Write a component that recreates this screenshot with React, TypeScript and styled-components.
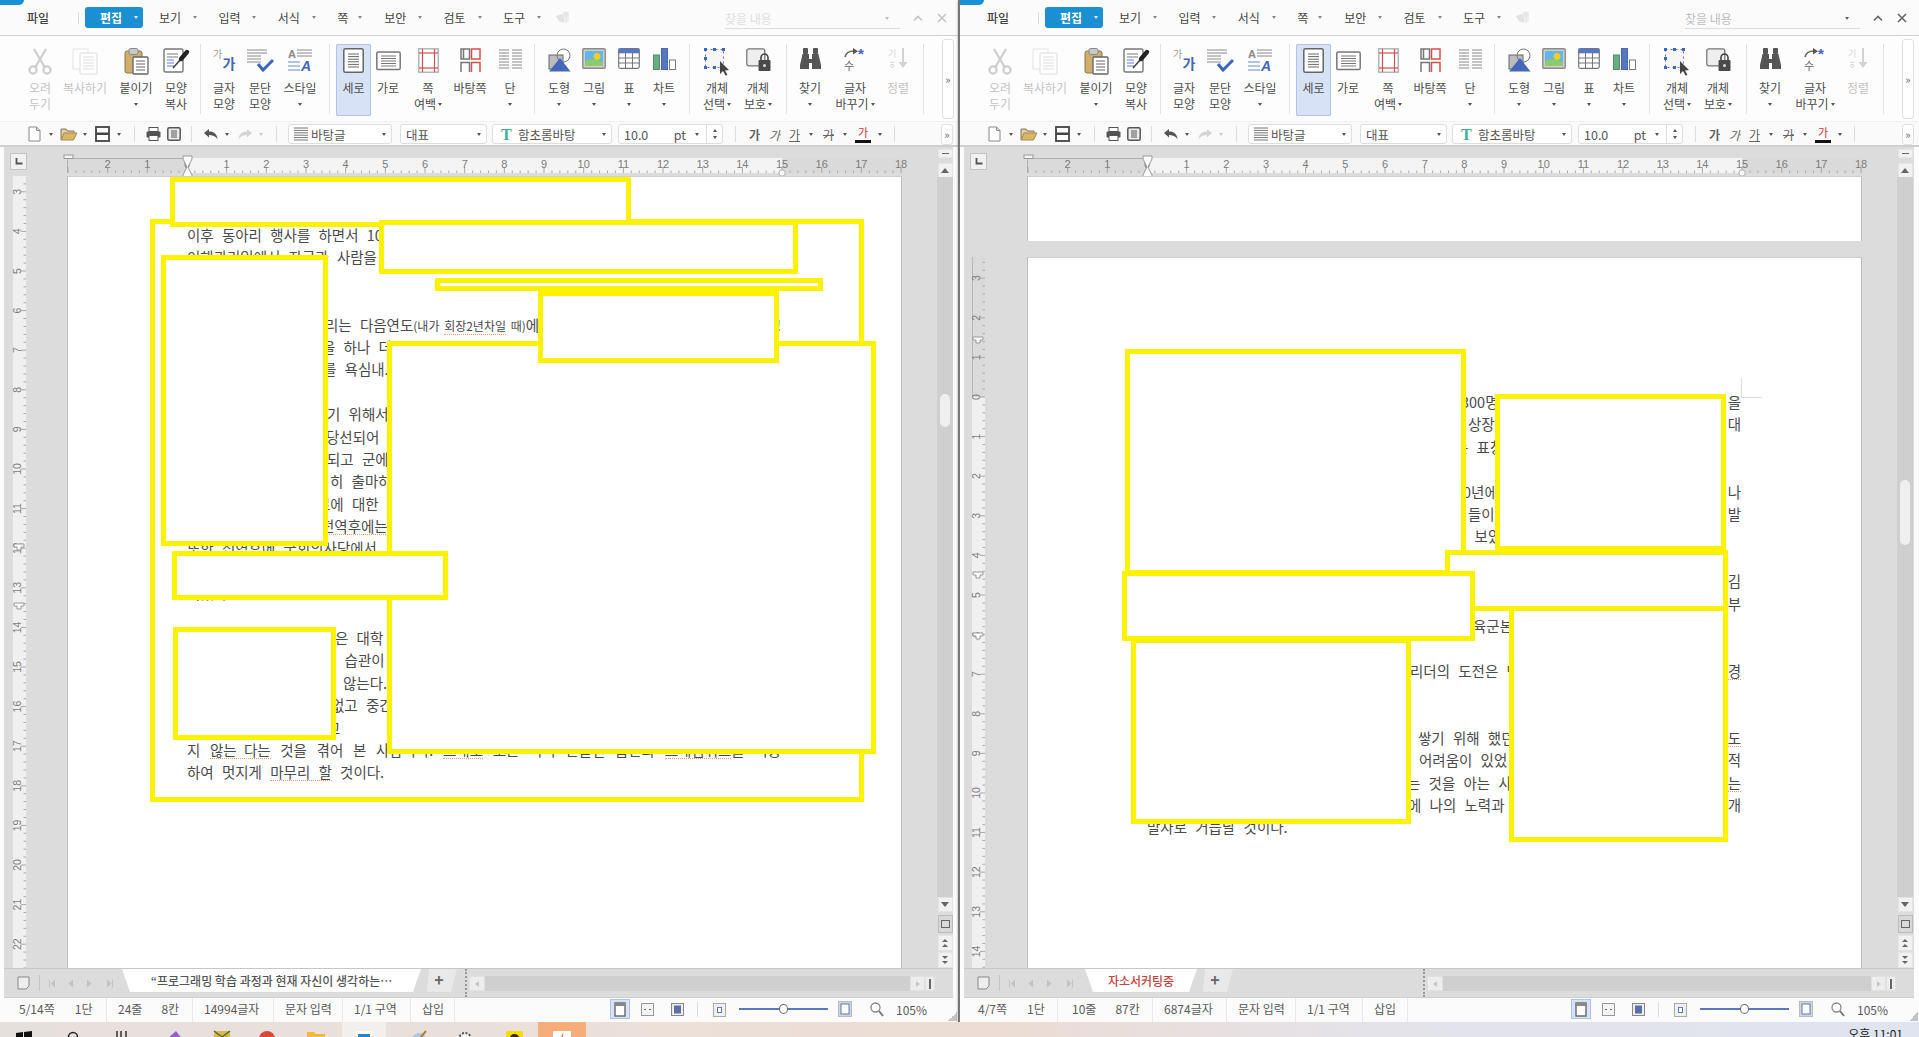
import React from "react";
import styled, { createGlobalStyle } from "styled-components";

const FONT = `"Noto Sans CJK KR", "Noto Sans", sans-serif`;

const GlobalStyle = createGlobalStyle`
  html, body {
    margin: 0;
    padding: 0;
    width: 1919px;
    height: 1037px;
    overflow: hidden;
    background: #e8e2de;
    font-family: ${FONT};
  }
`;

const Desktop = styled.div`
  width: 1919px;
  height: 1037px;
  display: flex;
  flex-direction: column;
  overflow: hidden;
`;

const Windows = styled.div`
  display: flex;
  height: 1022px;
`;

const Win = styled.div<{ $w: number; $second?: boolean }>`
  position: relative;
  box-sizing: border-box;
  width: ${(p) => p.$w}px;
  display: grid;
  grid-template-rows: 36px 86px 25px 821px 30px 24px;
  background: #fcfcfc;
  border-left: ${(p) => (p.$second ? "2px solid #777" : "none")};
  box-shadow: 0 1px 2px rgba(0, 0, 0, 0.45);
  overflow: hidden;
`;

/* menu bar */
const MenuBar = styled.div`
  position: relative;
  display: flex;
  align-items: center;
  border-bottom: 1px solid #d0d0d0;
  background: #fbfbfb;
  font-size: 12px;
  color: #444;
`;

const AppTab = styled.div`
  position: absolute;
  left: 0;
  top: 0;
  width: 24px;
  height: 5px;
  background: #1a8fd1;
  border-bottom-right-radius: 5px;
`;

const FileItem = styled.div`
  margin-left: 27px;
  width: 51px;
  font-weight: 500;
`;

const MenuSep = styled.div`
  width: 1px;
  height: 12px;
  background: #ddd;
`;

const ActiveMenu = styled.div`
  margin: 0 16px 0 6px;
  width: 58px;
  height: 21px;
  box-sizing: border-box;
  padding-left: 15px;
  display: flex;
  align-items: center;
  background: #1a8fd1;
  border-radius: 3px;
  color: #fff;
  font-weight: 700;
`;

const MenuItem = styled.div<{ $w: number }>`
  flex: none;
  width: ${(p) => p.$w}px;
  display: flex;
  align-items: center;
`;

const Caret = styled.span<{ $ml?: number; $color?: string }>`
  display: inline-block;
  flex: none;
  margin-left: ${(p) => p.$ml ?? 0}px;
  width: 0;
  height: 0;
  border-top: 3px solid ${(p) => p.$color ?? "#555"};
  border-left: 2.5px solid transparent;
  border-right: 2.5px solid transparent;
  vertical-align: middle;
`;

const MenuGhost = styled.div`
  margin-left: -6.4px;
  width: 169px;
  display: flex;
`;

const FindBox = styled.div<{ $dark?: boolean }>`
  box-sizing: border-box;
  width: 175px;
  height: 20px;
  margin-top: 3px;
  display: flex;
  align-items: center;
  justify-content: space-between;
  padding-right: 11px;
  border-bottom: 1px solid #ddd;
  color: ${(p) => (p.$dark ? "#bdbdbd" : "#dedede")};
`;

const WinBtn = styled.div<{ $dark?: boolean; $ml: number }>`
  margin-left: ${(p) => p.$ml}px;
  display: flex;
  color: ${(p) => (p.$dark ? "#666" : "#c4c4c4")};
`;

/* ribbon */
const Ribbon = styled.div`
  display: flex;
  padding-left: 18px;
  background: #fdfdfd;
  border-bottom: 1px solid #f0f0f0;
`;

const Group = styled.div<{ $w: number; $pad?: number }>`
  display: flex;
  box-sizing: border-box;
  width: ${(p) => p.$w}px;
  padding-left: ${(p) => p.$pad ?? 0}px;
`;

const GroupSep = styled.div`
  align-self: center;
  width: 1px;
  height: 70px;
  background: #e2e2e2;
`;

const Item = styled.div<{ $w: number; $off?: boolean; $active?: boolean }>`
  flex: none;
  box-sizing: border-box;
  width: ${(p) => p.$w}px;
  margin-top: ${(p) => (p.$active ? "8px" : "0")};
  height: ${(p) => (p.$active ? "72px" : "auto")};
  padding-top: ${(p) => (p.$active ? "4px" : "12px")};
  display: flex;
  flex-direction: column;
  align-items: center;
  white-space: nowrap;
  font-size: 12px;
  line-height: 16px;
  color: ${(p) => (p.$off ? "#c4c4c4" : "#4c4c4c")};
  background: ${(p) => (p.$active ? "#d8e2f6" : "transparent")};
  outline: ${(p) => (p.$active ? "1px solid #aec3ea" : "none")};
  outline-offset: -1px;
  border-radius: 2px;
`;

const Slot = styled.div`
  height: 32px;
  display: flex;
  justify-content: center;
  align-items: flex-start;
`;

const ItemLine = styled.div`
  height: 16px;
  display: flex;
  align-items: center;
`;

const CollapseBtn = styled.div`
  flex: none;
  box-sizing: border-box;
  margin: 3px 0 2px 18px;
  width: 12px;
  display: flex;
  align-items: center;
  justify-content: center;
  border: 1px solid #e0e0e0;
  border-radius: 3px;
  background: #fff;
  font-size: 11px;
  color: #666;
`;

/* toolbar */
const ToolBar = styled.div`
  display: flex;
  align-items: center;
  padding: 1px 0 0 28px;
  background: #fafafa;
  border-bottom: 2px solid #cfcfcf;
  font-size: 12.5px;
  color: #555;
`;

const Tool = styled.div<{ $ml: number; $w?: number }>`
  flex: none;
  display: flex;
  align-items: center;
  margin-left: ${(p) => p.$ml}px;
  ${(p) => (p.$w ? `width: ${p.$w}px;` : "")}
`;

const ToolSep = styled.div<{ $ml: number }>`
  flex: none;
  margin-left: ${(p) => p.$ml}px;
  width: 1px;
  height: 16px;
  background: #ddd;
`;

const Combo = styled.div<{ $ml: number; $w: number; $pad?: number; $gap?: number }>`
  flex: none;
  box-sizing: border-box;
  margin-left: ${(p) => p.$ml}px;
  width: ${(p) => p.$w}px;
  height: 20px;
  padding: 0 5px 0 ${(p) => p.$pad ?? 5}px;
  display: flex;
  align-items: center;
  gap: ${(p) => p.$gap ?? 3}px;
  background: #fff;
  border: 1px solid #dedede;
  border-radius: 3px;
  white-space: nowrap;
`;

const ComboEnd = styled.span`
  margin-left: auto;
  display: flex;
  align-items: center;
`;

const Spin = styled.div`
  margin-left: 7px;
  margin-right: -5px;
  width: 15px;
  align-self: stretch;
  height: 18px;
  border-left: 1px solid #dedede;
  display: flex;
  flex-direction: column;
  align-items: center;
  justify-content: center;
  gap: 4px;
`;

const CaretUp = styled(Caret)`
  border-top: none;
  border-bottom: 3px solid #555;
`;

const Glyph = styled.span<{ $ml: number; $bold?: boolean; $italic?: boolean; $under?: boolean; $strike?: boolean }>`
  flex: none;
  margin-left: ${(p) => p.$ml}px;
  width: 13px;
  text-align: center;
  font-size: 12px;
  line-height: 15px;
  font-weight: ${(p) => (p.$bold ? 700 : 400)};
  font-style: ${(p) => (p.$italic ? "italic" : "normal")};
  text-decoration: ${(p) => (p.$under ? "underline" : p.$strike ? "line-through" : "none")};
  color: #666;
`;

const ColorGlyph = styled.span<{ $ml: number }>`
  flex: none;
  margin-left: ${(p) => p.$ml}px;
  width: 16px;
  height: 17px;
  box-sizing: border-box;
  border-bottom: 3px solid #111;
  text-align: center;
  font-size: 11px;
  line-height: 13px;
  color: #c33;
`;

const ToolEnd = styled.div`
  margin-left: auto;
  margin-right: 5px;
  box-sizing: border-box;
  width: 12px;
  height: 21px;
  border: 1px solid #e0e0e0;
  border-radius: 3px;
  background: #fff;
  color: #666;
  font-size: 11px;
  display: flex;
  align-items: center;
  justify-content: center;
`;

/* work area */
const Workspace = styled.div`
  margin: 0 5px 0 4px;
  display: grid;
  grid-template-columns: 63px 835px 35px 16px;
  grid-template-rows: 29px 792px;
  background: #dcdcdc;
`;

const Corner = styled.div`
  margin: 6px 0 0 6px;
  box-sizing: border-box;
  width: 17px;
  height: 17px;
  background: #f1f1f1;
  border: 1px solid #c4c4c4;
  display: flex;
  align-items: center;
  justify-content: center;
`;

const RulerTop = styled.div`
  padding-top: 7px;
  height: 15px;
`;

const GapCell = styled.div`
  grid-row: 1 / 3;
  grid-column: 3;
`;

const RulerSide = styled.div<{ $top: number; $ml: number }>`
  padding: ${(p) => p.$top}px 0 0 ${(p) => p.$ml}px;
`;

const Pages = styled.div`
  display: flex;
  flex-direction: column;
  gap: 16px;
  min-height: 0;
`;

const Page = styled.div<{ $h?: number; $top?: number }>`
  position: relative;
  box-sizing: border-box;
  ${(p) => (p.$h ? `height: ${p.$h}px; flex: none;` : "flex: 1; min-height: 0;")}
  padding: ${(p) => p.$top ?? 0}px 0 0 119px;
  background: #fff;
  border-left: 1px solid #bdbdbd;
  border-right: 1px solid #bdbdbd;
  border-top: 1px solid #cfcfcf;
  color: #4a4a4a;
  font-size: 14.5px;
`;

const TextCol = styled.div`
  width: 594px;
`;

const Line = styled.div<{ $x?: number }>`
  box-sizing: border-box;
  height: 22.4px;
  line-height: 22.4px;
  padding-left: ${(p) => p.$x ?? 0}px;
  display: flex;
  justify-content: space-between;
  white-space: pre;
  word-spacing: 5px;
`;

const FullLine = styled.div`
  height: 22.4px;
  line-height: 22.4px;
  overflow: hidden;
  text-align: justify;
  text-align-last: justify;
  word-spacing: 4px;
`;

const Typo = styled.span`
  display: inline-block;
  height: 19px;
  line-height: 21px;
  border-bottom: 1px dotted #eb9a72;
`;

const Small = styled.span`
  font-size: 12px;
  word-spacing: 2px;
`;

const PageCorner = styled.div`
  position: absolute;
  left: 713px;
  top: 120px;
  width: 20px;
  height: 19px;
  border-left: 1px solid #ddd;
  border-bottom: 1px solid #ddd;
`;

const ScrollBar = styled.div`
  grid-row: 1 / 3;
  grid-column: 4;
  display: flex;
  flex-direction: column;
  align-items: center;
`;

const ScrollBtn = styled.div<{ $mt?: number; $h: number; $dark?: boolean }>`
  flex: none;
  box-sizing: border-box;
  width: 15px;
  height: ${(p) => p.$h}px;
  margin-top: ${(p) => p.$mt ?? 0}px;
  background: ${(p) => (p.$dark ? "#d8d8d8" : "#f1f1f1")};
  border: 1px solid ${(p) => (p.$dark ? "#bbb" : "#e4e4e4")};
  display: flex;
  flex-direction: column;
  gap: 2px;
  align-items: center;
  justify-content: center;
`;

const ScrollTrack = styled.div<{ $thumb: number; $len: number }>`
  flex: 1;
  align-self: stretch;
  background: #cfcfcf;
  box-sizing: border-box;
  padding: ${(p) => p.$thumb}px 3px 0;
  &::before {
    content: "";
    display: block;
    height: ${(p) => p.$len}px;
    border-radius: 5px;
    background: #efefef;
  }
`;

const ScrollHead = styled.div`
  flex: none;
  align-self: stretch;
  height: 30px;
  background: #dcdcdc;
  display: flex;
  flex-direction: column;
  align-items: center;
`;

const Dash = styled.div`
  width: 7px;
  height: 1.5px;
  background: #666;
`;

/* yellow cover boxes */
const Cover = styled.div<{ $x: number; $y: number; $w: number; $h: number; $hollow?: boolean }>`
  position: absolute;
  box-sizing: border-box;
  left: ${(p) => p.$x}px;
  top: ${(p) => p.$y}px;
  width: ${(p) => p.$w}px;
  height: ${(p) => p.$h}px;
  border: 5px solid #fff200;
  background: ${(p) => (p.$hollow ? "transparent" : "#fff")};
`;

/* sheet tabs */
const TabBar = styled.div`
  margin: 0 5px 0 4px;
  display: flex;
  align-items: flex-start;
  background: #dcdcdc;
  border-top: 1px solid #c6c6c6;
  border-bottom: 1px solid #cfcfcf;
`;

const TabArea = styled.div<{ $w: number }>`
  flex: none;
  width: ${(p) => p.$w}px;
  display: flex;
  align-items: flex-start;
`;

const NavZone = styled.div<{ $w: number }>`
  flex: none;
  box-sizing: border-box;
  width: ${(p) => p.$w}px;
  height: 28px;
  padding-left: 13px;
  display: flex;
  align-items: center;
`;

const NavSep = styled.div`
  margin: 0 9px 0 9px;
  width: 1px;
  height: 16px;
  background: #c4c4c4;
`;

const NavMark = styled.div<{ $ml: number }>`
  margin-left: ${(p) => p.$ml}px;
  display: flex;
`;

const SheetTab = styled.div<{ $w: number; $red?: boolean }>`
  flex: none;
  box-sizing: border-box;
  width: ${(p) => p.$w}px;
  height: 23px;
  display: flex;
  align-items: center;
  justify-content: center;
  white-space: nowrap;
  background: #fff;
  clip-path: polygon(0 0, 100% 0, calc(100% - 8px) 100%, 8px 100%);
  font-size: 12px;
  font-weight: 500;
  color: ${(p) => (p.$red ? "#c8413f" : "#555")};
`;

const AddTab = styled.div`
  flex: none;
  width: 36px;
  height: 23px;
  background: #e9e9e9;
  clip-path: polygon(8px 0, 100% 0, calc(100% - 6px) 100%, 6px 100%);
  text-align: center;
  font-size: 16px;
  line-height: 21px;
  font-weight: 700;
  color: #666;
`;

const Splitter = styled.div`
  flex: none;
  height: 28px;
  border-left: 2px dotted #999;
`;

const HScroll = styled.div`
  flex: 1;
  margin: 7px 18px 0 2px;
  height: 15px;
  display: flex;
  background: #cfcfcf;
`;

const HScrollBtn = styled.div<{ $w: number; $auto?: boolean }>`
  flex: none;
  box-sizing: border-box;
  width: ${(p) => p.$w}px;
  ${(p) => (p.$auto ? "margin-left: auto;" : "")}
  background: #ededed;
  border: 1px solid #e0e0e0;
  display: flex;
  align-items: center;
  justify-content: center;
`;

/* status bar */
const StatusBar = styled.div`
  position: relative;
  display: flex;
  align-items: stretch;
  background: #fbfbfb;
  font-size: 12px;
  color: #5a5a5a;
  white-space: nowrap;
`;

const Cell = styled.div<{ $w: number; $pad?: number; $gap?: number }>`
  flex: none;
  box-sizing: border-box;
  width: ${(p) => p.$w}px;
  padding: 0 0 3px ${(p) => p.$pad ?? 11}px;
  display: flex;
  align-items: center;
  gap: ${(p) => p.$gap ?? 0}px;
  border-right: 1px solid #e8e8e8;
`;

const StatusRight = styled.div`
  position: relative;
  box-sizing: border-box;
  margin-left: auto;
  padding-bottom: 2px;
  display: flex;
  align-items: center;
`;

const ViewBtn = styled.div<{ $ml?: number; $on?: boolean }>`
  flex: none;
  margin-left: ${(p) => p.$ml ?? 0}px;
  width: ${(p) => (p.$on ? "20px" : "14px")};
  height: 20px;
  display: flex;
  align-items: center;
  justify-content: center;
  background: ${(p) => (p.$on ? "#d8e2f6" : "transparent")};
  outline: ${(p) => (p.$on ? "1px solid #aec3ea" : "none")};
  outline-offset: -1px;
`;

const StatusDivider = styled.div`
  flex: none;
  margin-left: 13px;
  width: 1px;
  height: 15px;
  background: #ddd;
`;

const Slider = styled.div`
  position: relative;
  flex: none;
  margin-left: 13px;
  width: 89px;
  height: 10px;
  &::before {
    content: "";
    position: absolute;
    left: 0;
    right: 0;
    top: 4px;
    height: 2px;
    background: #5b78bf;
  }
  &::after {
    content: "";
    position: absolute;
    left: 40px;
    top: 0;
    box-sizing: border-box;
    width: 9px;
    height: 10px;
    border: 1px solid #666;
    border-radius: 50%;
    background: #fff;
  }
`;

const Zoom = styled.span`
  flex: none;
  margin-left: 12px;
  width: 62px;
`;

const Grip = styled.div`
  position: absolute;
  right: 1px;
  bottom: 1px;
  width: 9px;
  height: 9px;
  background: linear-gradient(135deg, transparent 50%, #c4c4c4 50%);
`;

/* task bar */
const TaskBar = styled.div`
  position: relative;
  flex: 1;
  display: flex;
  align-items: flex-start;
  overflow: hidden;
  background: linear-gradient(90deg, #e6e0dd 0%, #ece0d9 35%, #ecdcd3 52%, #e4e3ea 72%, #e0e4f0 100%);
`;

const TaskCell = styled.div<{ $ml: number; $w: number; $bg?: string }>`
  flex: none;
  margin-left: ${(p) => p.$ml}px;
  width: ${(p) => p.$w}px;
  height: 15px;
  padding-top: 9px;
  display: flex;
  justify-content: center;
  background: ${(p) => p.$bg ?? "transparent"};
`;

const Clock = styled.div`
  margin-left: auto;
  margin-right: 16px;
  padding-top: 3px;
  font-size: 12px;
  color: #222;
  white-space: nowrap;
`;

/* ---------- drawings ---------- */

const Svg = styled.svg`
  flex: none;
  overflow: visible;
`;

const Ico: React.FC<{ w: number; h: number; children: React.ReactNode }> = ({ w, h, children }) => (
  <Svg width={w} height={h} viewBox={`0 0 ${w} ${h}`} fill="none">
    {children}
  </Svg>
);

const Rows = ({ x1, x2, from, to, step, color }: { x1: number; x2: number; from: number; to: number; step: number; color: string }) => {
  const ys: number[] = [];
  for (let y = from; y <= to; y += step) ys.push(y);
  return (
    <>
      {ys.map((y) => (
        <line key={y} x1={x1} x2={x2} y1={y} y2={y} stroke={color} strokeWidth="1" />
      ))}
    </>
  );
};

const CutIcon = () => (
  <Ico w={24} h={27}>
    <g stroke="#cdcdcd" strokeWidth="2.2">
      <circle cx="5" cy="22" r="3.6" />
      <circle cx="19" cy="22" r="3.6" />
      <line x1="7.5" y1="19" x2="18" y2="1" />
      <line x1="16.5" y1="19" x2="6" y2="1" />
    </g>
  </Ico>
);

const CopyIcon = () => (
  <Ico w={26} h={27}>
    <rect x="1" y="1" width="15" height="20" stroke="#e4e4e4" fill="#fff" />
    <rect x="8" y="5" width="17" height="21" rx="1" stroke="#dcdcdc" fill="#fff" />
    <Rows x1={11} x2={22} from={9} to={23} step={3} color="#ddd" />
  </Ico>
);

const PasteIcon = () => (
  <Ico w={25} h={27}>
    <rect x="1" y="3" width="17" height="22" rx="2" fill="#cdae6e" stroke="#8e7748" />
    <rect x="5" y="0.5" width="9" height="6" rx="1.5" fill="#c8c8c8" stroke="#888" />
    <rect x="9" y="9" width="15" height="17" rx="1" fill="#fff" stroke="#666" strokeWidth="1.3" />
    <Rows x1={12} x2={21} from={13} to={22} step={3} color="#666" />
  </Ico>
);

const FormatIcon = () => (
  <Ico w={26} h={27}>
    <rect x="1" y="1" width="19" height="23" rx="1.5" fill="#fff" stroke="#777" strokeWidth="1.4" />
    <Rows x1={4} x2={15} from={6} to={9} step={3} color="#777" />
    <Rows x1={4} x2={11} from={12} to={18} step={3} color="#5a7bc8" />
    <line x1="10" y1="20" x2="18" y2="11" stroke="#444" strokeWidth="1.6" />
    <line x1="18" y1="11" x2="24" y2="4" stroke="#222" strokeWidth="4.4" strokeLinecap="round" />
  </Ico>
);

const CharIcon = () => (
  <Ico w={23} h={24}>
    <text x="0" y="10" fontSize="10" fill="#999" fontFamily={FONT}>가</text>
    <text x="9.5" y="21" fontSize="14" fontWeight="700" fill="#4467b8" fontFamily={FONT}>가</text>
  </Ico>
);

const ParaIcon = () => (
  <Ico w={27} h={24}>
    <Rows x1={0} x2={20} from={2} to={5} step={3} color="#888" />
    <Rows x1={0} x2={14} from={8} to={14} step={3} color="#888" />
    <polyline points="11,16 16,22 26,12" stroke="#3f66bd" strokeWidth="3" />
  </Ico>
);

const StyleIcon = () => (
  <Ico w={25} h={24}>
    <text x="0" y="10" fontSize="11" fontWeight="700" fill="#888" fontFamily="Liberation Sans">A</text>
    <Rows x1={9} x2={24} from={2} to={8} step={3} color="#888" />
    <Rows x1={0} x2={12} from={14} to={22} step={4} color="#6a88cc" />
    <text x="13" y="23" fontSize="14" fontWeight="700" fontStyle="italic" fill="#3f66bd" fontFamily="Liberation Sans">A</text>
  </Ico>
);

const PortraitIcon = () => (
  <Ico w={21} h={25}>
    <rect x="0.8" y="0.8" width="19.4" height="23.4" rx="1.5" fill="#fff" stroke="#666" strokeWidth="1.5" />
    <Rows x1={5} x2={16} from={6} to={19} step={2.6} color="#666" />
  </Ico>
);

const LandscapeIcon = () => (
  <Ico w={25} h={25}>
    <rect x="0.8" y="4" width="23.4" height="17.4" rx="1.5" fill="#fff" stroke="#777" strokeWidth="1.5" />
    <Rows x1={5} x2={20} from={8} to={18} step={2.5} color="#777" />
  </Ico>
);

const MarginIcon = () => (
  <Ico w={21} h={25}>
    <rect x="0.8" y="0.8" width="19.4" height="23.4" stroke="#aaa" strokeWidth="1.3" fill="#fff" />
    <g stroke="#d2504f" strokeWidth="1.2">
      <line x1="4.5" x2="4.5" y1="1" y2="24" />
      <line x1="16.5" x2="16.5" y1="1" y2="24" />
      <line x1="1" x2="20" y1="5" y2="5" />
      <line x1="1" x2="20" y1="20" y2="20" />
    </g>
  </Ico>
);

const MasterIcon = () => (
  <Ico w={21} h={25}>
    <g stroke="#777" strokeWidth="1.5">
      <rect x="1" y="1" width="8.5" height="10" />
      <path d="M1 24V14.5H9.5V24" />
      <line x1="3.5" x2="3.5" y1="1" y2="11" />
    </g>
    <g stroke="#d2504f" strokeWidth="1.5">
      <rect x="11.5" y="1" width="8.5" height="10" />
      <path d="M11.5 24V14.5H20V24" />
    </g>
  </Ico>
);

const ColumnsIcon = () => (
  <Ico w={23} h={25}>
    <g strokeWidth="1.2">
      <Rows x1={0} x2={10} from={2} to={20} step={3} color="#8a8a8a" />
      <Rows x1={13} x2={23} from={2} to={20} step={3} color="#8a8a8a" />
    </g>
  </Ico>
);

const ShapeIcon = () => (
  <Ico w={23} h={24}>
    <rect x="1" y="7" width="14" height="14" fill="#bdbdbd" stroke="#666" />
    <circle cx="15.5" cy="7.5" r="6.5" stroke="#777" fill="none" />
    <polygon points="12,10 22.5,23.5 1,23.5" fill="#4467b8" />
  </Ico>
);

const PictureIcon = () => (
  <Ico w={24} h={21}>
    <rect x="0.8" y="0.8" width="22.4" height="19.4" rx="1" fill="#cfcfcf" stroke="#8a8a8a" strokeWidth="1.4" />
    <rect x="3" y="3" width="18" height="15" fill="#62b7e8" />
    <circle cx="15" cy="8.5" r="3.4" fill="#f2cf1d" />
    <path d="M3 13C8 10 14 12 21 14V18H3Z" fill="#8ecb6c" />
  </Ico>
);

const TableIcon = () => (
  <Ico w={22} h={21}>
    <rect x="0.7" y="0.7" width="20.6" height="19.6" rx="1.5" fill="#fff" stroke="#777" strokeWidth="1.2" />
    <rect x="0.7" y="0.7" width="20.6" height="4.6" fill="#5577c4" />
    <g stroke="#777">
      <line x1="1" x2="21" y1="10" y2="10" />
      <line x1="1" x2="21" y1="15" y2="15" />
      <line x1="7.5" x2="7.5" y1="5" y2="20" />
      <line x1="14.5" x2="14.5" y1="5" y2="20" />
    </g>
  </Ico>
);

const ChartIcon = () => (
  <Ico w={23} h={22}>
    <rect x="0.5" y="7" width="6" height="14.5" fill="#6aaa84" stroke="#4f8f6a" />
    <rect x="8.5" y="0.5" width="6" height="21" fill="#5577c4" stroke="#4467b8" />
    <rect x="16.5" y="12" width="6" height="9.5" fill="#fff" stroke="#777" />
  </Ico>
);

const SelectIcon = () => (
  <Ico w={26} h={28}>
    <rect x="1.5" y="1.5" width="18" height="18" stroke="#5577c4" strokeDasharray="2 3" fill="#f6f6f6" />
    <g fill="#3f66bd">
      <rect x="0" y="0" width="3" height="3" />
      <rect x="9" y="0" width="3" height="3" />
      <rect x="18" y="0" width="3" height="3" />
      <rect x="0" y="9" width="3" height="3" />
      <rect x="0" y="18" width="3" height="3" />
      <rect x="9" y="18" width="3" height="3" />
    </g>
    <polygon points="16,13 25,22 21,22.5 23.5,27 21.5,27.5 19,23 16,26" fill="#444" />
  </Ico>
);

const ProtectIcon = () => (
  <Ico w={25} h={24}>
    <rect x="0.8" y="0.8" width="18" height="17" rx="2" fill="#eee" stroke="#777" strokeWidth="1.3" />
    <path d="M15 12V9.5a3.5 3.5 0 0 1 7 0V12" stroke="#444" strokeWidth="1.6" />
    <rect x="12.5" y="12" width="12" height="11" rx="1" fill="#4a4a4a" />
    <circle cx="18.5" cy="17.5" r="1.5" fill="#ddd" />
  </Ico>
);

const FindIcon = () => (
  <Ico w={21} h={22}>
    <g fill="#555">
      <rect x="3" y="0" width="5" height="6" rx="1" />
      <rect x="13" y="0" width="5" height="6" rx="1" />
      <path d="M2.5 6H9V11H12V6H18.5L21 17V21H12V15H9V21H0V17Z" />
    </g>
  </Ico>
);

const ReplaceIcon = () => (
  <Ico w={25} h={22}>
    <path d="M2 9C3 4 7 3 11 3" stroke="#666" strokeWidth="1.6" />
    <polygon points="10,0 15,3.2 10,6.4" fill="#555" />
    <text x="15" y="11" fontSize="15" fontWeight="700" fill="#3f66bd" fontFamily="Liberation Sans">*</text>
    <text x="1" y="22" fontSize="11" fill="#666" fontFamily={FONT}>수</text>
  </Ico>
);

const SortIcon = () => (
  <Ico w={20} h={22}>
    <text x="0" y="9" fontSize="9" fill="#d6d6d6" fontFamily={FONT}>기</text>
    <text x="0" y="20" fontSize="9" fill="#d6d6d6" fontFamily={FONT}>ㅎ</text>
    <line x1="15" x2="15" y1="0" y2="16" stroke="#d2d2d2" strokeWidth="2" />
    <polygon points="10.5,14 19.5,14 15,20" fill="#d2d2d2" />
  </Ico>
);

const NewDocIcon = () => (
  <Ico w={13} h={16}>
    <path d="M1 1H8.5L12 4.5V15H1Z" fill="#fff" stroke="#888" />
    <path d="M8.5 1V4.5H12" stroke="#888" />
  </Ico>
);

const OpenIcon = () => (
  <Ico w={17} h={14}>
    <path d="M1 13V2H6L7.5 4H14V6" stroke="#777" fill="#e6cf95" />
    <path d="M1 13L4 6H17L13.5 13Z" fill="#d9b766" stroke="#a58b4f" />
  </Ico>
);

const SaveIcon = () => (
  <Ico w={15} h={16}>
    <rect x="1" y="1" width="13" height="14" fill="#fff" stroke="#444" strokeWidth="1.8" />
    <rect x="1" y="6.5" width="13" height="2.5" fill="#444" />
  </Ico>
);

const PrintIcon = () => (
  <Ico w={15} h={14}>
    <rect x="3" y="0.5" width="9" height="4" fill="#fff" stroke="#555" />
    <rect x="0.5" y="4.5" width="14" height="6" rx="1" fill="#555" />
    <rect x="3" y="8.5" width="9" height="5" fill="#fff" stroke="#555" />
  </Ico>
);

const PreviewIcon = () => (
  <Ico w={14} h={14}>
    <rect x="0.8" y="0.8" width="12.4" height="12.4" rx="1.5" fill="#ececec" stroke="#555" strokeWidth="1.5" />
    <Rows x1={4} x2={10} from={4} to={10} step={2} color="#555" />
  </Ico>
);

const UndoIcon = ({ off, flip }: { off?: boolean; flip?: boolean }) => (
  <Ico w={15} h={12}>
    <g transform={flip ? "translate(15 0) scale(-1 1)" : undefined}>
      <path d="M1 5L6 1V3.5C11 3.5 14 6 14.5 11C12 8 9.5 7 6 7V9.5Z" fill={off ? "#d4d4d4" : "#555"} />
    </g>
  </Ico>
);

const ParaStyleIcon = () => (
  <Ico w={14} h={14}>
    <Rows x1={0} x2={14} from={1} to={13} step={2.4} color="#777" />
  </Ico>
);

const TypeIcon = () => (
  <Ico w={12} h={14}>
    <text x="0" y="13" fontSize="16" fontWeight="700" fontFamily="Liberation Serif" fill="#3fae9c">T</text>
  </Ico>
);

const CornerMark = () => (
  <Ico w={8} h={7}>
    <path d="M1.5 0V5.5H7.5" stroke="#555" strokeWidth="1.8" />
  </Ico>
);

const BookIcon = () => (
  <Ico w={13} h={14}>
    <path d="M1 1H12V10L9 13H1Z" fill="#eee" stroke="#888" />
  </Ico>
);

const Nav = ({ dir, bar, ml }: { dir: "l" | "r"; bar?: boolean; ml: number }) => (
  <NavMark $ml={ml}>
    <Ico w={7} h={9}>
      <polygon points={dir === "l" ? "6,0.5 6,8.5 1.5,4.5" : "1,0.5 1,8.5 5.5,4.5"} fill="#c2c2c2" />
      {bar && <line x1={dir === "l" ? 0.5 : 6.5} x2={dir === "l" ? 0.5 : 6.5} y1="0.5" y2="8.5" stroke="#c2c2c2" />}
    </Ico>
  </NavMark>
);

const Tri = ({ dir, small }: { dir: "u" | "d" | "l" | "r"; small?: boolean }) => {
  if (small) {
    return (
      <Ico w={6} h={3}>
        <polygon points={dir === "u" ? "3,0 6,3 0,3" : "0,0 6,0 3,3"} fill="#666" />
      </Ico>
    );
  }
  return (
    <Ico w={8} h={5}>
      {dir === "u" && <polygon points="4,0 8,5 0,5" fill="#666" />}
      {dir === "d" && <polygon points="0,0 8,0 4,5" fill="#666" />}
      {dir === "l" && <polygon points="6,0 6,6 2,3" fill="#c4c4c4" />}
      {dir === "r" && <polygon points="2,0 2,6 6,3" fill="#c4c4c4" />}
    </Ico>
  );
};

const HRuler = () => {
  const zero = 120;
  const unit = 39.67;
  const ticks: number[] = [];
  for (let i = -15; i <= 90; i++) ticks.push(i);
  const nums: number[] = [];
  for (let n = -2; n <= 18; n++) nums.push(n);
  return (
    <Ico w={835} h={15}>
      <rect x="0" y="0" width="835" height="15" fill="#dadada" />
      <rect x={zero} y="0" width={unit * 15} height="15" fill="#f4f4f4" />
      <line x1="0" x2="120" y1="0.5" y2="0.5" stroke="#b0b0b0" />
      <line x1="0.5" x2="0.5" y1="0" y2="15" stroke="#b0b0b0" />
      {ticks.map((i) => {
        const x = zero + (i * unit) / 5;
        if (x < 0 || x > 835) return null;
        return <line key={i} x1={x} x2={x} y1={i % 5 === 0 ? 9 : 12.5} y2={15} stroke="#a8a8a8" />;
      })}
      {nums.map((n) => (
        <text key={n} x={zero + n * unit} y="9.5" textAnchor="middle" fontSize="11" fill="#7c7c7c" fontFamily="Liberation Sans">
          {Math.abs(n)}
        </text>
      ))}
      <rect x="-3" y="-3" width="9" height="3.5" fill="#f4f4f4" stroke="#999" />
      <polygon points="116,-2 125,-2 125,1 121,9 125,17 125,21 116,21 116,17 120,9 116,1" fill="#fafafa" stroke="#999" />
      <circle cx={zero + unit * 15} cy="15" r="3.2" fill="#fff" stroke="#aaa" />
    </Ico>
  );
};

const VRuler = ({ h, zeroAt, lightFrom, marks, labels }: { h: number; zeroAt: number; lightFrom: number; marks: number[]; labels: (n: number) => number }) => {
  const unit = 39.6;
  const ticks: number[] = [];
  for (let i = -40; i <= 130; i++) ticks.push(i);
  const nums: number[] = [];
  for (let n = -8; n <= 30; n++) nums.push(n);
  return (
    <Ico w={13} h={h}>
      <rect x="0" y="0" width="13" height={h} fill="#dadada" />
      <rect x="0" y={lightFrom} width="13" height={h - lightFrom} fill="#f0f0f0" />
      <line x1="0.5" x2="0.5" y1="0" y2={lightFrom} stroke="#b8b8b8" />
      {ticks.map((i) => {
        const y = zeroAt + (i * unit) / 5;
        if (y < 0 || y > h) return null;
        return <line key={i} x1={i % 5 === 0 ? 8 : 10.5} x2={13} y1={y} y2={y} stroke="#a8a8a8" />;
      })}
      {nums.map((n) => {
        const y = zeroAt + n * unit;
        if (y < 4 || y > h - 4) return null;
        return (
          <text key={n} x="8" y={y} textAnchor="middle" fontSize="10.5" fill="#7c7c7c" fontFamily="Liberation Sans" transform={`rotate(-90 8 ${y})`}>
            {labels(n)}
          </text>
        );
      })}
      {marks.map((m) => (
        <path key={m} d={`M1 ${m - 3}H11V${m}H8V${m + 3}H4V${m}H1Z`} fill="#fafafa" stroke="#999" />
      ))}
    </Ico>
  );
};

/* ---------- parts ---------- */

type RibbonEntry = {
  w: number;
  icon: React.ReactNode;
  lines: [string, string?];
  caret?: boolean;
  off?: boolean;
  active?: boolean;
};

const groups: { w: number; pad?: number; items: RibbonEntry[] }[] = [
  {
    w: 182,
    items: [
      { w: 44, icon: <CutIcon />, lines: ["오려", "두기"], off: true },
      { w: 46, icon: <CopyIcon />, lines: ["복사하기"], off: true },
      { w: 56, icon: <PasteIcon />, lines: ["붙이기", ""], caret: true },
      { w: 24, icon: <FormatIcon />, lines: ["모양", "복사"] },
    ],
  },
  {
    w: 128,
    items: [
      { w: 46, icon: <CharIcon />, lines: ["글자", "모양"] },
      { w: 26, icon: <ParaIcon />, lines: ["문단", "모양"] },
      { w: 54, icon: <StyleIcon />, lines: ["스타일", ""], caret: true },
    ],
  },
  {
    w: 204,
    pad: 6,
    items: [
      { w: 35, icon: <PortraitIcon />, lines: ["세로"], active: true },
      { w: 34, icon: <LandscapeIcon />, lines: ["가로"] },
      { w: 46, icon: <MarginIcon />, lines: ["쪽", "여백"], caret: true },
      { w: 38, icon: <MasterIcon />, lines: ["바탕쪽"] },
      { w: 42, icon: <ColumnsIcon />, lines: ["단", ""], caret: true },
    ],
  },
  {
    w: 154,
    pad: 6.5,
    items: [
      { w: 35, icon: <ShapeIcon />, lines: ["도형", ""], caret: true },
      { w: 35, icon: <PictureIcon />, lines: ["그림", ""], caret: true },
      { w: 35, icon: <TableIcon />, lines: ["표", ""], caret: true },
      { w: 35, icon: <ChartIcon />, lines: ["차트", ""], caret: true },
    ],
  },
  {
    w: 96,
    pad: 6.5,
    items: [
      { w: 41, icon: <SelectIcon />, lines: ["개체", "선택"], caret: true },
      { w: 41, icon: <ProtectIcon />, lines: ["개체", "보호"], caret: true },
    ],
  },
  {
    w: 136,
    items: [
      { w: 46, icon: <FindIcon />, lines: ["찾기", ""], caret: true },
      { w: 44, icon: <ReplaceIcon />, lines: ["글자", "바꾸기"], caret: true },
      { w: 42, icon: <SortIcon />, lines: ["정렬"], off: true },
    ],
  },
];

const RibbonBar = () => (
  <Ribbon>
    {groups.map((g, i) => (
      <React.Fragment key={i}>
        <Group $w={g.w} $pad={g.pad}>
          {g.items.map((it) => (
            <Item key={it.lines.join("")} $w={it.w} $off={it.off} $active={it.active}>
              <Slot>{it.icon}</Slot>
              <ItemLine>{it.lines[0]}</ItemLine>
              {it.lines[1] !== undefined && (
                <ItemLine>
                  {it.lines[1]}
                  {it.caret && <Caret $ml={it.lines[1] ? 2 : 0} />}
                </ItemLine>
              )}
            </Item>
          ))}
        </Group>
        <GroupSep />
      </React.Fragment>
    ))}
    <CollapseBtn>»</CollapseBtn>
  </Ribbon>
);

const Menu = ({ dark }: { dark?: boolean }) => (
  <MenuBar>
    <AppTab />
    <FileItem>파일</FileItem>
    <MenuSep />
    <ActiveMenu>
      편집
      <Caret $ml={12} $color="#fff" />
    </ActiveMenu>
    {["보기", "입력", "서식", "쪽", "보안", "검토", "도구"].map((m) => (
      <MenuItem key={m} $w={m === "쪽" ? 47 : 59.4}>
        {m}
        <Caret $ml={m === "쪽" ? 10 : 12} $color="#888" />
      </MenuItem>
    ))}
    <MenuGhost>
      <Ico w={14} h={13}>
        <path d="M0 5L6 3L8 6V12L3 10Z" fill="#e2e2e2" />
        <circle cx="10" cy="3.5" r="3" fill="#e6e6e6" />
        <path d="M8 7L13 5V10L9 13Z" fill="#ececec" />
      </Ico>
    </MenuGhost>
    <FindBox $dark={dark}>
      찾을 내용
      <Caret $color={dark ? "#666" : "#bbb"} />
    </FindBox>
    <WinBtn $dark={dark} $ml={13}>
      <Ico w={10} h={6}>
        <polyline points="1,5.5 5,1.5 9,5.5" stroke="currentColor" strokeWidth="1.6" />
      </Ico>
    </WinBtn>
    <WinBtn $dark={dark} $ml={14}>
      <Ico w={10} h={10}>
        <path d="M1 1L9 9M9 1L1 9" stroke="currentColor" strokeWidth="1.6" />
      </Ico>
    </WinBtn>
  </MenuBar>
);

const Tools = () => (
  <ToolBar>
    <Tool $ml={0}><NewDocIcon /></Tool>
    <Caret $ml={8} />
    <Tool $ml={7}><OpenIcon /></Tool>
    <Caret $ml={6} />
    <Tool $ml={8}><SaveIcon /></Tool>
    <Caret $ml={7} />
    <ToolSep $ml={13} />
    <Tool $ml={11}><PrintIcon /></Tool>
    <Tool $ml={6}><PreviewIcon /></Tool>
    <ToolSep $ml={10} />
    <Tool $ml={11}><UndoIcon /></Tool>
    <Caret $ml={7} />
    <Tool $ml={9}><UndoIcon off flip /></Tool>
    <Caret $ml={6} $color="#ccc" />
    <ToolSep $ml={13} />
    <Combo $ml={11} $w={104}>
      <ParaStyleIcon />
      바탕글
      <ComboEnd><Caret /></ComboEnd>
    </Combo>
    <Combo $ml={8} $w={87}>
      대표
      <ComboEnd><Caret /></ComboEnd>
    </Combo>
    <Combo $ml={5} $w={120} $pad={8} $gap={5}>
      <TypeIcon />
      함초롬바탕
      <ComboEnd><Caret /></ComboEnd>
    </Combo>
    <Combo $ml={6} $w={105}>
      10.0
      <ComboEnd>
        pt
        <Caret $ml={9} />
        <Spin>
          <CaretUp />
          <Caret />
        </Spin>
      </ComboEnd>
    </Combo>
    <ToolSep $ml={12} />
    <Glyph $ml={12} $bold>가</Glyph>
    <Glyph $ml={7} $italic>가</Glyph>
    <Glyph $ml={7} $under>가</Glyph>
    <Caret $ml={8} />
    <Glyph $ml={9} $strike>가</Glyph>
    <Caret $ml={8} />
    <ColorGlyph $ml={8}>가</ColorGlyph>
    <Caret $ml={7} />
    <ToolSep $ml={12} />
    <ToolEnd>»</ToolEnd>
  </ToolBar>
);

const Scroll = ({ thumb, len }: { thumb: number; len: number }) => (
  <ScrollBar>
    <ScrollHead>
      <ScrollBtn $mt={2} $h={9}><Dash /></ScrollBtn>
      <ScrollBtn $mt={5} $h={15}><Tri dir="u" /></ScrollBtn>
    </ScrollHead>
    <ScrollTrack $thumb={thumb} $len={len} />
    <ScrollBtn $h={15}><Tri dir="d" /></ScrollBtn>
    <ScrollBtn $mt={3} $h={18} $dark>
      <Ico w={9} h={8}>
        <rect x="0.5" y="0.5" width="8" height="7" stroke="#666" />
      </Ico>
    </ScrollBtn>
    <ScrollBtn $mt={2} $h={16}>
      <Tri dir="u" small />
      <Tri dir="u" small />
    </ScrollBtn>
    <ScrollBtn $mt={1} $h={16}>
      <Tri dir="d" small />
      <Tri dir="d" small />
    </ScrollBtn>
  </ScrollBar>
);

const Sheets = ({ navW, areaW, tabW, red, children }: { navW: number; areaW: number; tabW: number; red?: boolean; children: React.ReactNode }) => (
  <TabBar>
    <TabArea $w={areaW}>
      <NavZone $w={navW}>
        <BookIcon />
        <NavSep />
        <Nav dir="l" bar ml={0} />
        <Nav dir="l" ml={11} />
        <Nav dir="r" ml={12} />
        <Nav dir="r" bar ml={13} />
      </NavZone>
      <SheetTab $w={tabW} $red={red}>{children}</SheetTab>
      <AddTab>+</AddTab>
    </TabArea>
    <Splitter />
    <HScroll>
      <HScrollBtn $w={16}><Tri dir="l" /></HScrollBtn>
      <HScrollBtn $w={15} $auto><Tri dir="r" /></HScrollBtn>
      <HScrollBtn $w={10}>
        <Ico w={2} h={10}>
          <rect width="2" height="10" fill="#666" />
        </Ico>
      </HScrollBtn>
    </HScroll>
  </TabBar>
);

const Status = ({ cells }: { cells: { w: number; pad?: number; gap?: number; parts: string[] }[] }) => (
  <StatusBar>
    {cells.map((c) => (
      <Cell key={c.parts[0]} $w={c.w} $pad={c.pad} $gap={c.gap}>
        {c.parts.map((t) => (
          <span key={t}>{t}</span>
        ))}
      </Cell>
    ))}
    <StatusRight>
      <ViewBtn $on>
        <Ico w={12} h={15}>
          <rect x="1" y="1" width="10" height="13" fill="#fff" stroke="#666" strokeWidth="1.4" />
          <rect x="1" y="1" width="10" height="3" fill="#888" />
        </Ico>
      </ViewBtn>
      <ViewBtn $ml={10}>
        <Ico w={13} h={15}>
          <rect x="0.5" y="1.5" width="12" height="12" fill="#f4f4f4" stroke="#999" />
          <path d="M3 7.5H5M8 7.5H10" stroke="#666" />
        </Ico>
      </ViewBtn>
      <ViewBtn $ml={16}>
        <Ico w={13} h={15}>
          <rect x="0.5" y="1.5" width="12" height="12" fill="#eee" stroke="#888" />
          <rect x="3" y="3.5" width="7" height="8" fill="#5b6fa6" />
        </Ico>
      </ViewBtn>
      <StatusDivider />
      <ViewBtn $ml={14}>
        <Ico w={13} h={15}>
          <rect x="0.5" y="1.5" width="12" height="13" fill="#f0f0f0" stroke="#aaa" />
          <rect x="4.5" y="5.5" width="4" height="5" fill="#fff" stroke="#5b78bf" />
        </Ico>
      </ViewBtn>
      <Slider />
      <ViewBtn $ml={10}>
        <Ico w={14} h={16}>
          <rect x="0.5" y="0.5" width="13" height="15" fill="#d4d4d4" stroke="#bbb" />
          <rect x="3" y="3" width="8" height="10" fill="#fff" stroke="#5b78bf" />
        </Ico>
      </ViewBtn>
      <ViewBtn $ml={18}>
        <Ico w={14} h={15}>
          <circle cx="5.5" cy="5.5" r="4.5" stroke="#888" strokeWidth="1.3" fill="#fff" />
          <line x1="9" y1="9" x2="13" y2="14" stroke="#777" strokeWidth="2" />
        </Ico>
      </ViewBtn>
      <Zoom>105%</Zoom>
    </StatusRight>
    <Grip />
  </StatusBar>
);

const FirstPage = () => (
  <Page $top={47}>
    <TextCol>
      <Line>이후 동아리 행사를 하면서 10</Line>
      <Line>이해관리인에서 자금과 사람을</Line>
      <Line />
      <Line />
      <Line $x={138}>
        <span>
          리는 다음연도<Small>(내가 <Typo>회장2년차일</Typo> 때)</Small>에
        </span>
        <span>!</span>
      </Line>
      <Line $x={135}>을 하나 더</Line>
      <Line $x={136}>를 욕심내.</Line>
      <Line />
      <Line $x={140}>기 위해서</Line>
      <Line $x={139}>당선되어</Line>
      <Line $x={140}>되고 군에</Line>
      <Line $x={143}>히 출마하</Line>
      <Line $x={130}>로에 대한</Line>
      <Line $x={134}>
        <Typo>전역후에는</Typo>
      </Line>
      <Line>또한 전역후에 국회의사당에서</Line>
      <Line />
      <Line>되었다.</Line>
      <Line />
      <Line $x={148}>은 대학</Line>
      <Line $x={136}>는 습관이</Line>
      <Line $x={156}>않는다.</Line>
      <Line $x={144}>없고 중간</Line>
      <Line $x={140}>고 <Typo>있는</Typo> 좋</Line>
      <FullLine>
        지 <Typo>않는 다는</Typo> 것을 겪어 본 사람이다. <Typo>그래도</Typo> 모든 이미 만들던 습관과 <Typo>프레임워크</Typo>를 적용
      </FullLine>
      <Line>
        <span>
          하여 멋지게 <Typo>마무리 할</Typo> 것이다.
        </span>
      </Line>
    </TextCol>
  </Page>
);

const SecondPage = () => (
  <Page $top={133}>
    <PageCorner />
    <TextCol>
      <Line $x={314}>
        <span>300명</span>
        <span>을</span>
      </Line>
      <Line $x={321}>
        <span>상장</span>
        <span>대</span>
      </Line>
      <Line $x={308}>는 표창</Line>
      <Line />
      <Line $x={316}>
        <span>0년에</span>
        <span>나</span>
      </Line>
      <Line $x={321}>
        <span>들이</span>
        <span>발</span>
      </Line>
      <Line $x={306}>를 보았</Line>
      <Line />
      <Line $x={500}>
        <span />
        <span>김</span>
      </Line>
      <Line $x={500}>
        <span />
        <span>부</span>
      </Line>
      <Line $x={326}>육군본</Line>
      <Line />
      <Line $x={263}>
        <span>리더의 도전은 면</span>
        <Typo>경</Typo>
      </Line>
      <Line />
      <Line />
      <Line $x={271}>
        <span>쌓기 위해 했던</span>
        <Typo>도</Typo>
      </Line>
      <Line $x={272}>
        <span>어려움이 있었</span>
        <span>적</span>
      </Line>
      <Line $x={260}>
        <span>는 것을 아는 사</span>
        <Typo>는</Typo>
      </Line>
      <Line $x={261}>
        <span>에 나의 노력과</span>
        <span>개</span>
      </Line>
      <Line>발자로 거듭날 것이다.</Line>
    </TextCol>
  </Page>
);

type Box = [number, number, number, number, boolean?];

const leftBoxes: Box[] = [
  [150, 219, 714, 583, true],
  [170, 177, 461, 50],
  [161, 255, 167, 291],
  [379, 220, 419, 54],
  [435, 278, 388, 13],
  [387, 341, 489, 413],
  [538, 291, 241, 72],
  [172, 551, 276, 49],
  [173, 627, 163, 113],
];

const rightBoxes: Box[] = [
  [1125, 349, 341, 226],
  [1495, 394, 231, 157],
  [1445, 550, 283, 61],
  [1131, 638, 280, 186],
  [1122, 571, 353, 70],
  [1509, 606, 219, 236],
];

const Covers = ({ boxes, origin }: { boxes: Box[]; origin: number }) => (
  <>
    {boxes.map(([x, y, w, h, hollow]) => (
      <Cover key={`${x}-${y}`} $x={x - origin} $y={y} $w={w} $h={h} $hollow={hollow} />
    ))}
  </>
);

const TaskIcons = () => (
  <>
    <TaskCell $ml={14} $w={20}>
      <Ico w={16} h={16}>
        <path d="M0 2L7 1V7.5H0ZM8 1L16 0V7.5H8ZM0 8.5H7V15L0 14ZM8 8.5H16V16L8 15Z" fill="#111" />
      </Ico>
    </TaskCell>
    <TaskCell $ml={29} $w={20}>
      <Ico w={14} h={14}>
        <circle cx="7" cy="6" r="4.5" stroke="#222" strokeWidth="1.5" />
      </Ico>
    </TaskCell>
    <TaskCell $ml={29} $w={20}>
      <Ico w={12} h={12}>
        <path d="M1 0V12M5 0V12M10 0V12" stroke="#333" strokeWidth="1.5" />
      </Ico>
    </TaskCell>
    <TaskCell $ml={33} $w={20}>
      <Ico w={16} h={16}>
        <path d="M0 8L9 0L16 9V16H0Z" fill="#9a5bd0" />
      </Ico>
    </TaskCell>
    <TaskCell $ml={27} $w={20}>
      <Ico w={16} h={16}>
        <rect x="0" y="0" width="16" height="16" fill="#d9b94d" />
        <path d="M0 0L8 6L16 0" stroke="#4e6b3a" strokeWidth="1.5" />
      </Ico>
    </TaskCell>
    <TaskCell $ml={25} $w={20}>
      <Ico w={16} h={16}>
        <circle cx="8" cy="8" r="8" fill="#d9473c" />
      </Ico>
    </TaskCell>
    <TaskCell $ml={29} $w={20}>
      <Ico w={18} h={16}>
        <path d="M0 1H7L9 3H18V16H0Z" fill="#f0b93a" />
      </Ico>
    </TaskCell>
    <TaskCell $ml={16} $w={44} $bg="#f3efec">
      <Ico w={18} h={16}>
        <rect x="1" y="0" width="16" height="16" rx="2" fill="#fff" />
        <rect x="3" y="3" width="12" height="12" fill="#2b86c9" />
      </Ico>
    </TaskCell>
    <TaskCell $ml={24} $w={20}>
      <Ico w={16} h={16}>
        <circle cx="7" cy="9" r="7" fill="#a9c7dd" />
        <path d="M9 6L14 0" stroke="#b5793d" strokeWidth="2" />
      </Ico>
    </TaskCell>
    <TaskCell $ml={25} $w={20}>
      <Ico w={16} h={16}>
        <circle cx="8" cy="8" r="6" stroke="#555" strokeWidth="2" strokeDasharray="2 1.5" fill="#f4f4f4" />
      </Ico>
    </TaskCell>
    <TaskCell $ml={29} $w={20}>
      <Ico w={17} h={16}>
        <rect x="0" y="0" width="17" height="16" fill="#f7dd00" />
        <circle cx="8.5" cy="8" r="5" fill="#3b2a1e" />
      </Ico>
    </TaskCell>
    <TaskCell $ml={14} $w={48} $bg="#f5ae79">
      <Ico w={18} h={16}>
        <rect x="0" y="0" width="18" height="16" rx="1" fill="#fff" />
        <path d="M10 3L7 10H10L8 14" stroke="#e8803c" strokeWidth="1.4" />
      </Ico>
    </TaskCell>
  </>
);

const App = () => {
  return (
    <>
      <GlobalStyle />
      <Desktop>
        <Windows>
          <Win $w={958}>
            <Menu />
            <RibbonBar />
            <Tools />
            <Workspace>
              <Corner><CornerMark /></Corner>
              <RulerTop><HRuler /></RulerTop>
              <GapCell />
              <Scroll thumb={217} len={33} />
              <RulerSide $top={0} $ml={9}>
                <VRuler h={792} zeroAt={-103} lightFrom={0} marks={[371, 430]} labels={(n) => Math.abs(n)} />
              </RulerSide>
              <Pages>
                <FirstPage />
              </Pages>
            </Workspace>
            <Sheets navW={118} areaW={461} tabW={299}>
              “프로그래밍 학습 과정과 현재 자신이 생각하는⋯
            </Sheets>
            <Status
              cells={[
                { w: 107, pad: 19, gap: 20, parts: ["5/14쪽", "1단"] },
                { w: 86, gap: 19, parts: ["24줄", "8칸"] },
                { w: 81, parts: ["14994글자"] },
                { w: 69, parts: ["문자 입력"] },
                { w: 68, parts: ["1/1 구역"] },
                { w: 44, parts: ["삽입"] },
              ]}
            />
            <Covers boxes={leftBoxes} origin={0} />
          </Win>
          <Win $w={961} $second>
            <Menu dark />
            <RibbonBar />
            <Tools />
            <Workspace>
              <Corner><CornerMark /></Corner>
              <RulerTop><HRuler /></RulerTop>
              <GapCell />
              <Scroll thumb={303} len={65} />
              <RulerSide $top={81} $ml={8}>
                <VRuler h={711} zeroAt={140} lightFrom={140} marks={[83, 318, 379]} labels={(n) => Math.abs(n)} />
              </RulerSide>
              <Pages>
                <Page $h={65} />
                <SecondPage />
              </Pages>
            </Workspace>
            <Sheets navW={121} areaW={459} tabW={112} red>
              자소서커팅중
            </Sheets>
            <Status
              cells={[
                { w: 98, pad: 18, gap: 20, parts: ["4/7쪽", "1단"] },
                { w: 95, pad: 14, gap: 19, parts: ["10줄", "87칸"] },
                { w: 74, parts: ["6874글자"] },
                { w: 69, parts: ["문자 입력"] },
                { w: 67, parts: ["1/1 구역"] },
                { w: 45, parts: ["삽입"] },
              ]}
            />
            <Covers boxes={rightBoxes} origin={960} />
          </Win>
        </Windows>
        <TaskBar>
          <TaskIcons />
          <Clock>오후 11:01</Clock>
        </TaskBar>
      </Desktop>
    </>
  );
};

export default App;
